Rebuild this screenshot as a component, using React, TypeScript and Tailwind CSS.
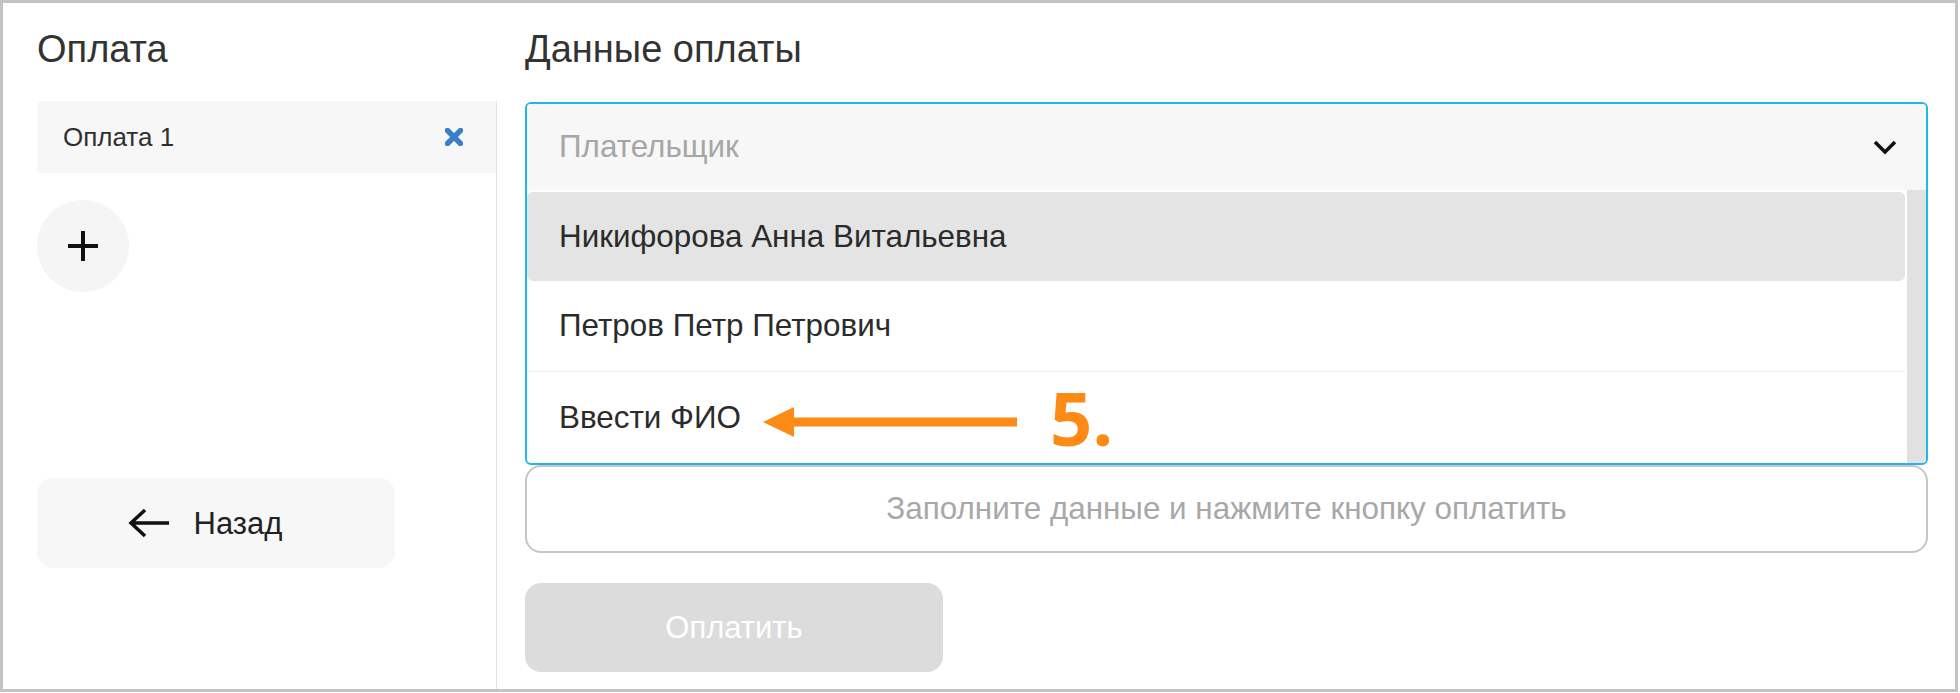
import React from 'react'

const payers = [
    { name: 'Никифорова Анна Витальевна', active: true },
    { name: 'Петров Петр Петрович', active: false },
    { name: 'Ввести ФИО', active: false },
]

export default function App() {
    return (
        <div className="w-[1958px] h-[692px] border-[3px] border-[#c3c3c3] bg-white flex relative font-['Liberation_Sans',Arial,sans-serif] text-[#2f2f2f]">
            {/* Left column */}
            <div className="w-[494px] flex flex-col pl-[34px]">
                <h2 className="mt-[24px] h-[44px] text-[38px] leading-[44px] text-[#333]">Оплата</h2>
                <div className="mt-[30px] flex-1 border-r border-[#e4e4e4] flex flex-col items-start">
                    <div className="w-full h-[72px] bg-[#f7f7f7] rounded-l-[3px] flex items-center justify-between pl-[26px] pr-[33px]">
                        <span className="text-[26px] leading-none">Оплата 1</span>
                        <svg width="18" height="18" viewBox="0 0 18 18">
                            <path d="M2.5 2.5 L15.5 15.5 M15.5 2.5 L2.5 15.5" stroke="#3b80c6" strokeWidth="5.5" strokeLinecap="round" />
                        </svg>
                    </div>
                    <button className="mt-[27px] w-[92px] h-[92px] rounded-full bg-[#f5f5f5] flex items-center justify-center">
                        <svg width="30" height="30" viewBox="0 0 30 30">
                            <path d="M15 0 V30 M0 15 H30" stroke="#111" strokeWidth="4" />
                        </svg>
                    </button>
                    <button className="mt-[186px] w-[358px] h-[90px] rounded-2xl bg-[#f7f7f7] flex items-center justify-center gap-[24px] pr-[22px]">
                        <svg width="42" height="30" viewBox="0 0 42 30">
                            <path d="M41 15 H3 M17 2 L3 15 L17 28" stroke="#111" strokeWidth="3.5" fill="none" />
                        </svg>
                        <span className="text-[31px] leading-none text-[#222]">Назад</span>
                    </button>
                </div>
            </div>

            {/* Right column */}
            <div className="flex-1 flex flex-col pl-[28px] pr-[27px]">
                <h2 className="mt-[24px] h-[44px] text-[38px] leading-[44px] text-[#333]">Данные оплаты</h2>

                {/* Select with open list */}
                <div className="mt-[31px] border-2 border-[#22b8e6] rounded-[6px] overflow-hidden flex flex-col">
                    <div className="h-[86px] bg-[#f7f7f7] flex items-center justify-between pl-[32px] pr-[29px]">
                        <span className="text-[31.4px] leading-none text-[#a6a6a6]">Плательщик</span>
                        <svg width="24" height="15" viewBox="0 0 24 15">
                            <path d="M2 2 L12 12 L22 2" stroke="#111" strokeWidth="3.5" fill="none" />
                        </svg>
                    </div>
                    <div className="flex">
                        <div className="flex-1 flex flex-col pr-[2px]">
                            {payers.map((p, i) => (
                                <div key={i} className={`h-[91px] ${i === 1 ? 'border-b border-[#f1f1f1]' : ''} ${i === 0 ? 'pt-[2px]' : ''}`}>
                                    <div className={`h-full flex items-center pl-[32px] rounded-[6px] ${p.active ? 'bg-[#e4e4e4]' : ''}`}>
                                        <span className="text-[31.4px] leading-none text-[#2b2b2b]">{p.name}</span>
                                    </div>
                                </div>
                            ))}
                        </div>
                        <div className="w-[19px] bg-[#e1e1e2]" />
                    </div>
                </div>

                <div className="h-[88px] border-2 border-[#c6c6c6] rounded-2xl flex items-center justify-center">
                    <span className="text-[31.4px] leading-none text-[#a8a8a8]">Заполните данные и нажмите кнопку оплатить</span>
                </div>

                <button className="mt-[30px] w-[418px] h-[89px] rounded-2xl bg-[#dcdcdc] flex items-center justify-center">
                    <span className="text-[31px] leading-none text-white">Оплатить</span>
                </button>
            </div>

            {/* Annotation */}
            <svg className="absolute left-[760px] top-[403px]" width="254" height="32" viewBox="0 0 254 32">
                <polygon points="0,16 31,1 31,31" fill="#fd8a14" />
                <rect x="29" y="11.5" width="225" height="9" fill="#fd8a14" />
            </svg>
            <div className="absolute left-[1047px] top-[378px] text-[74px] leading-none font-bold text-[#fd8a14] font-['Open_Sans',sans-serif]">5.</div>
        </div>
    )
}
